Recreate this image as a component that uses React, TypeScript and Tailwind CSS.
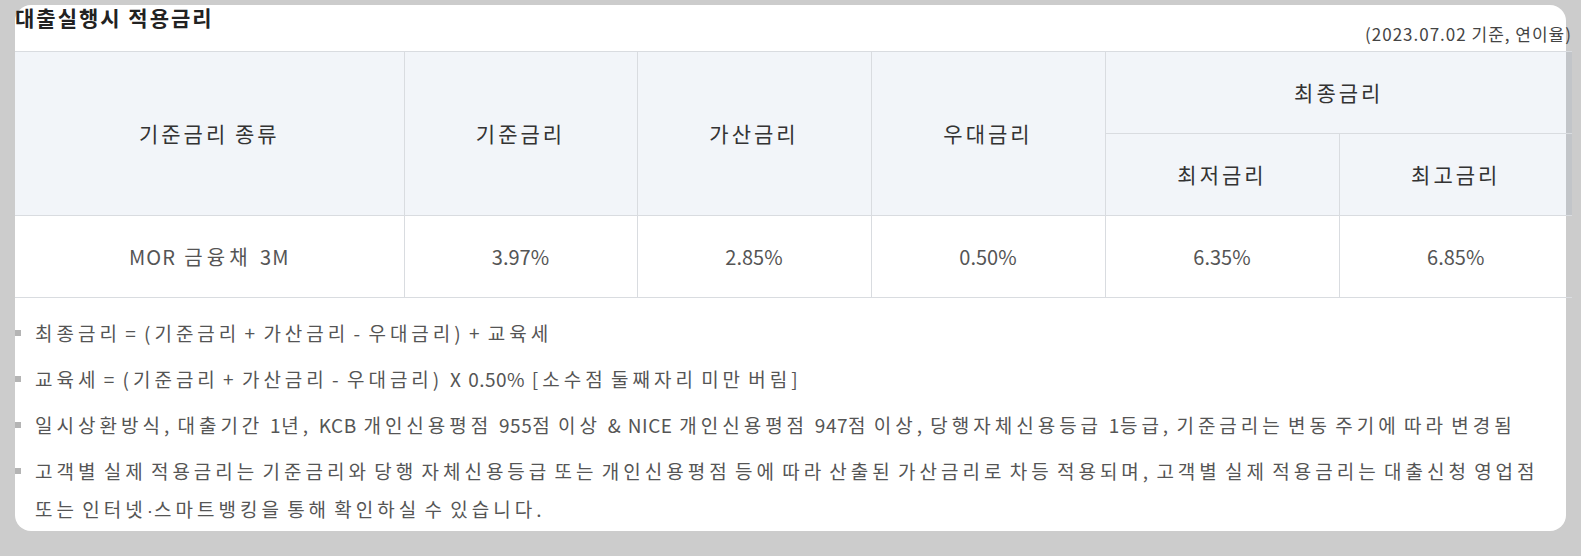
import React from "react";

const font = { fontFamily: '"Noto Sans CJK KR", "Noto Sans", sans-serif' };

function T({ text }: { text: string }) {
  const parts = text.split(/( ?[A-Za-z0-9.%&]+(?: [A-Za-z0-9.%&]+)* ?)/);
  return (
    <>
      {parts.map((p, i) =>
        i % 2 === 1 ? (
          <span key={i} className="tracking-[0.5px] [word-spacing:2px]">
            {p}
          </span>
        ) : (
          <React.Fragment key={i}>{p}</React.Fragment>
        )
      )}
    </>
  );
}

function Bullet({ children }: { children: React.ReactNode }) {
  return (
    <li className="relative mt-[8px] pl-[20px] leading-[38px] first:mt-0">
      <span className="absolute left-0 top-[16px] h-[6px] w-[6px] bg-[#b4b4b4]" />
      {children}
    </li>
  );
}

export default function App() {
  const th =
    "border border-[#d9dce0] bg-[rgba(40,90,160,0.06)] font-normal text-[#333] text-[21px] tracking-[3px] [word-spacing:-1px]";
  const td = "border border-[#d9dce0] text-center text-[#555] text-[20px]";
  return (
    <div className="h-[556px] w-[1581px] bg-[#cccccc] p-[15px]" style={font}>
      <div className="h-[526px] w-[1551px] rounded-[16px] bg-white">
        <div className="w-[1557px]">
          <div className="-mt-[10px] text-[21px] font-bold leading-[24px] tracking-[2px] text-[#222]">
            대출실행시 적용금리
          </div>
          <div className="-mt-[6px] mb-[6px] text-right text-[17px] leading-[22px] tracking-[1px] text-[#444]">
            (2023.07.02 기준, 연이율)
          </div>
          <table className="w-[1557px] table-fixed border-collapse text-center">
            <colgroup>
              <col className="w-[389px]" />
              <col className="w-[233px]" />
              <col className="w-[234px]" />
              <col className="w-[234px]" />
              <col className="w-[234px]" />
              <col className="w-[233px]" />
            </colgroup>
            <thead>
              <tr className="h-[82px]">
                <th rowSpan={2} className={th + " border-l-0"}>기준금리 종류</th>
                <th rowSpan={2} className={th}>기준금리</th>
                <th rowSpan={2} className={th}>가산금리</th>
                <th rowSpan={2} className={th}>우대금리</th>
                <th colSpan={2} className={th + " border-r-0"}>최종금리</th>
              </tr>
              <tr className="h-[82px]">
                <th className={th}>최저금리</th>
                <th className={th + " border-r-0"}>최고금리</th>
              </tr>
            </thead>
            <tbody>
              <tr className="h-[82px]">
                <td className={td + " border-l-0 tracking-[1px] [word-spacing:3px]"}>
                  MOR <span className="tracking-[4px]">금융채</span> 3M
                </td>
                <td className={td}>3.97%</td>
                <td className={td}>2.85%</td>
                <td className={td}>0.50%</td>
                <td className={td}>6.35%</td>
                <td className={td + " border-r-0"}>6.85%</td>
              </tr>
            </tbody>
          </table>
          <ul className="mt-[16px] text-[19px] tracking-[4px] text-[#555] [word-spacing:-4px]">
            <Bullet>최종금리 = (기준금리 + 가산금리 - 우대금리) + 교육세</Bullet>
            <Bullet>
              <T text="교육세 = (기준금리 + 가산금리 - 우대금리) X 0.50% [소수점 둘째자리 미만 버림]" />
            </Bullet>
            <Bullet>
              <T text="일시상환방식, 대출기간 1년, KCB 개인신용평점 955점 이상 & NICE 개인신용평점 947점 이상, 당행자체신용등급 1등급, 기준금리는 변동 주기에 따라 변경됨" />
            </Bullet>
            <Bullet>
              <span className="whitespace-nowrap">
                고객별 실제 적용금리는 기준금리와 당행 자체신용등급 또는 개인신용평점 등에 따라 산출된 가산금리로 차등 적용되며, 고객별 실제 적용금리는 대출신청 영업점
              </span>
              <br />
              또는 인터넷
              <span className="tracking-[1px]" style={{ fontFamily: '"Liberation Sans", sans-serif' }}>·</span>
              스마트뱅킹을 통해 확인하실 수 있습니다.
            </Bullet>
          </ul>
        </div>
      </div>
    </div>
  );
}
